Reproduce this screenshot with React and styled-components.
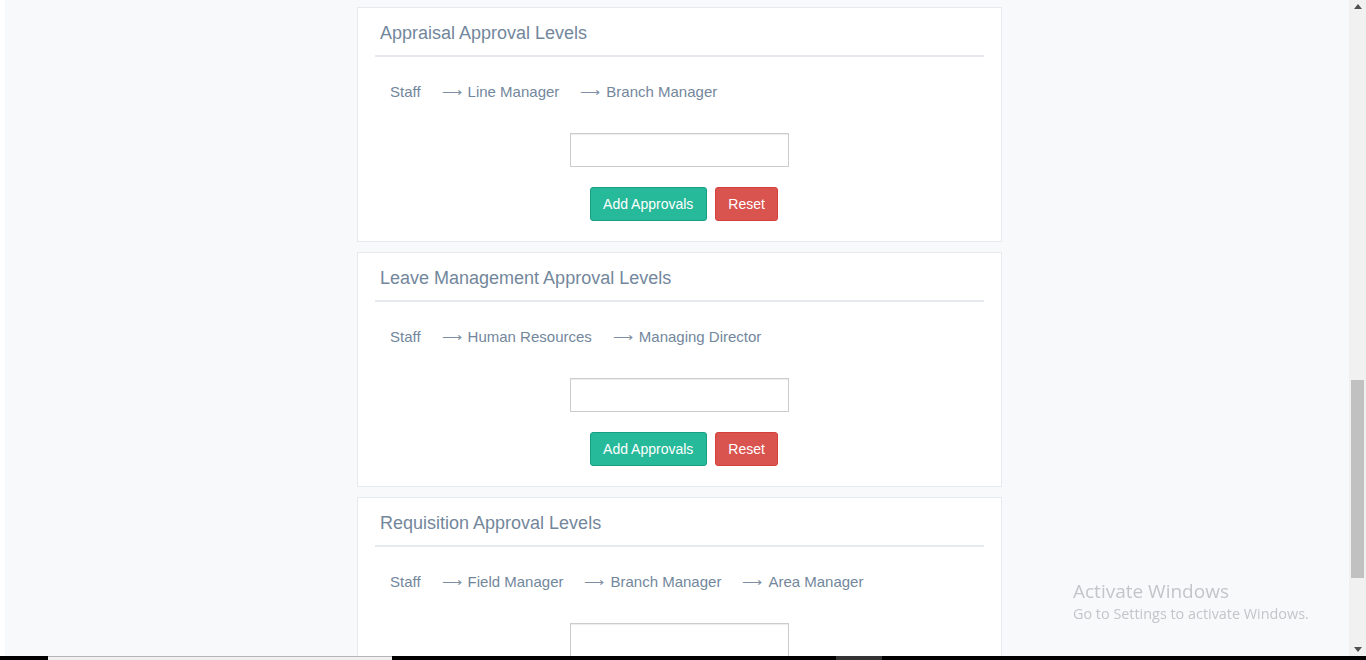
import styled, { createGlobalStyle } from "styled-components";

const GlobalStyle = createGlobalStyle`
  * { box-sizing: border-box; }
  html, body { margin: 0; padding: 0; height: 660px; overflow: hidden; }
  body {
    font-family: "Liberation Sans", Arial, sans-serif;
    color: #73879C;
  }
`;

const Screen = styled.div`
  width: 1366px;
  height: 660px;
  display: flex;
  flex-direction: column;
  overflow: hidden;
`;

const Desktop = styled.div`
  flex: 1;
  display: flex;
  min-height: 0;
`;

const Page = styled.div`
  flex: 1;
  background: #f8f9fb;
  border-left: 5px solid #ffffff;
  padding-top: 7px;
  overflow: hidden;
`;

const Column = styled.div`
  width: 645px;
  margin-left: 352px;
  display: flex;
  flex-direction: column;
  gap: 10px;
`;

const Card = styled.section`
  background: #ffffff;
  border: 1px solid #e6e9ed;
  padding: 12px 17px 20px;
  flex-shrink: 0;
`;

const Titulo = styled.h2`
  margin: 0;
  padding: 0 5px 8px;
  font-size: 18px;
  font-weight: 400;
  line-height: 27px;
  color: #73879C;
  border-bottom: 2px solid #e6e9ed;
`;

const Pasos = styled.ul`
  list-style: none;
  margin: 24px 0 0;
  padding: 0 0 0 5px;
  display: flex;
  font-size: 15px;
  line-height: 21px;
`;

const Paso = styled.li`
  padding: 0 10px;
  margin-right: 1px;
  white-space: nowrap;
`;

const Flecha = styled.span`
  font-family: "DejaVu Sans", sans-serif;
  font-size: 14px;
  font-weight: 300;
  margin-right: 6px;
  color: #7d8ea3;
`;

const Campo = styled.input`
  display: block;
  width: 219px;
  height: 34px;
  margin: 30px auto 0;
  border: 1px solid #cccccc;
  box-shadow: inset 0 1px 1px rgba(0, 0, 0, 0.075);
  outline: none;
`;

const Opciones = styled.div`
  display: flex;
  justify-content: center;
  gap: 8px;
  margin-top: 20px;
  padding-left: 9px;
`;

const Boton = styled.button`
  height: 34px;
  padding: 0 12.5px;
  border-radius: 3px;
  font-family: "Liberation Sans", Arial, sans-serif;
  font-size: 14px;
  color: #ffffff;
  background: ${(props) => (props.$tipo === "peligro" ? "#d9534f" : "#26B99A")};
  border: 1px solid ${(props) => (props.$tipo === "peligro" ? "#d43f3a" : "#169F85")};
`;

const Scrollbar = styled.div`
  width: 17px;
  background: #f1f1f1;
  display: flex;
  flex-direction: column;
  align-items: center;
  padding: 4px 0;
`;

const Track = styled.div`
  flex: 1;
  width: 100%;
  display: flex;
  flex-direction: column;
  padding: 0 2px;
`;

const Thumb = styled.div`
  background: #c1c1c1;
  height: 198px;
  margin-top: 371px;
`;

const Taskbar = styled.div`
  height: 4px;
  background: #000000;
  display: flex;
`;

const Segmento = styled.div`
  width: ${(props) => props.$ancho}px;
  margin-left: ${(props) => props.$desde}px;
  background: ${(props) => props.$color};
  border-top: ${(props) => (props.$borde ? "1px solid #b5b5b5" : "none")};
`;

const Marca = styled.div`
  position: fixed;
  left: 1073px;
  top: 578px;
  font-family: "Open Sans", "Noto Sans", sans-serif;
  color: #c3c5c8;
  pointer-events: none;

  h4 {
    margin: 0;
    font-size: 19px;
    font-weight: 400;
    line-height: 26px;
  }
  p {
    margin: 0;
    font-size: 14.4px;
    line-height: 19px;
  }
`;

const niveles = [
  { titulo: "Appraisal Approval Levels", pasos: ["Line Manager", "Branch Manager"] },
  { titulo: "Leave Management Approval Levels", pasos: ["Human Resources", "Managing Director"] },
  { titulo: "Requisition Approval Levels", pasos: ["Field Manager", "Branch Manager", "Area Manager"] },
];

function Arrow({ dir }) {
  return (
    <svg width="8" height="5" viewBox="0 0 8 5">
      <path d={dir === "up" ? "M0 5 L4 0 L8 5 Z" : "M0 0 L4 5 L8 0 Z"} fill="#505050" />
    </svg>
  );
}

function App() {
  return (
    <Screen>
      <GlobalStyle />
      <Desktop>
        <Page>
          <Column>
            {niveles.map((item, i) => (
              <Card key={i}>
                <Titulo>{item.titulo}</Titulo>
                <Pasos>
                  <Paso>Staff</Paso>
                  {item.pasos.map((paso) => (
                    <Paso key={paso}>
                      <Flecha>⟶</Flecha>
                      {paso}
                    </Paso>
                  ))}
                </Pasos>
                <Campo type="text" />
                <Opciones>
                  <Boton>Add Approvals</Boton>
                  <Boton $tipo="peligro">Reset</Boton>
                </Opciones>
              </Card>
            ))}
          </Column>
        </Page>
        <Scrollbar>
          <Arrow dir="up" />
          <Track>
            <Thumb />
          </Track>
          <Arrow dir="down" />
        </Scrollbar>
      </Desktop>
      <Taskbar>
        <Segmento $desde={48} $ancho={344} $color="#f0f0f0" $borde />
        <Segmento $desde={444} $ancho={46} $color="#333333" />
      </Taskbar>
      <Marca>
        <h4>Activate Windows</h4>
        <p>Go to Settings to activate Windows.</p>
      </Marca>
    </Screen>
  );
}

export default App;
